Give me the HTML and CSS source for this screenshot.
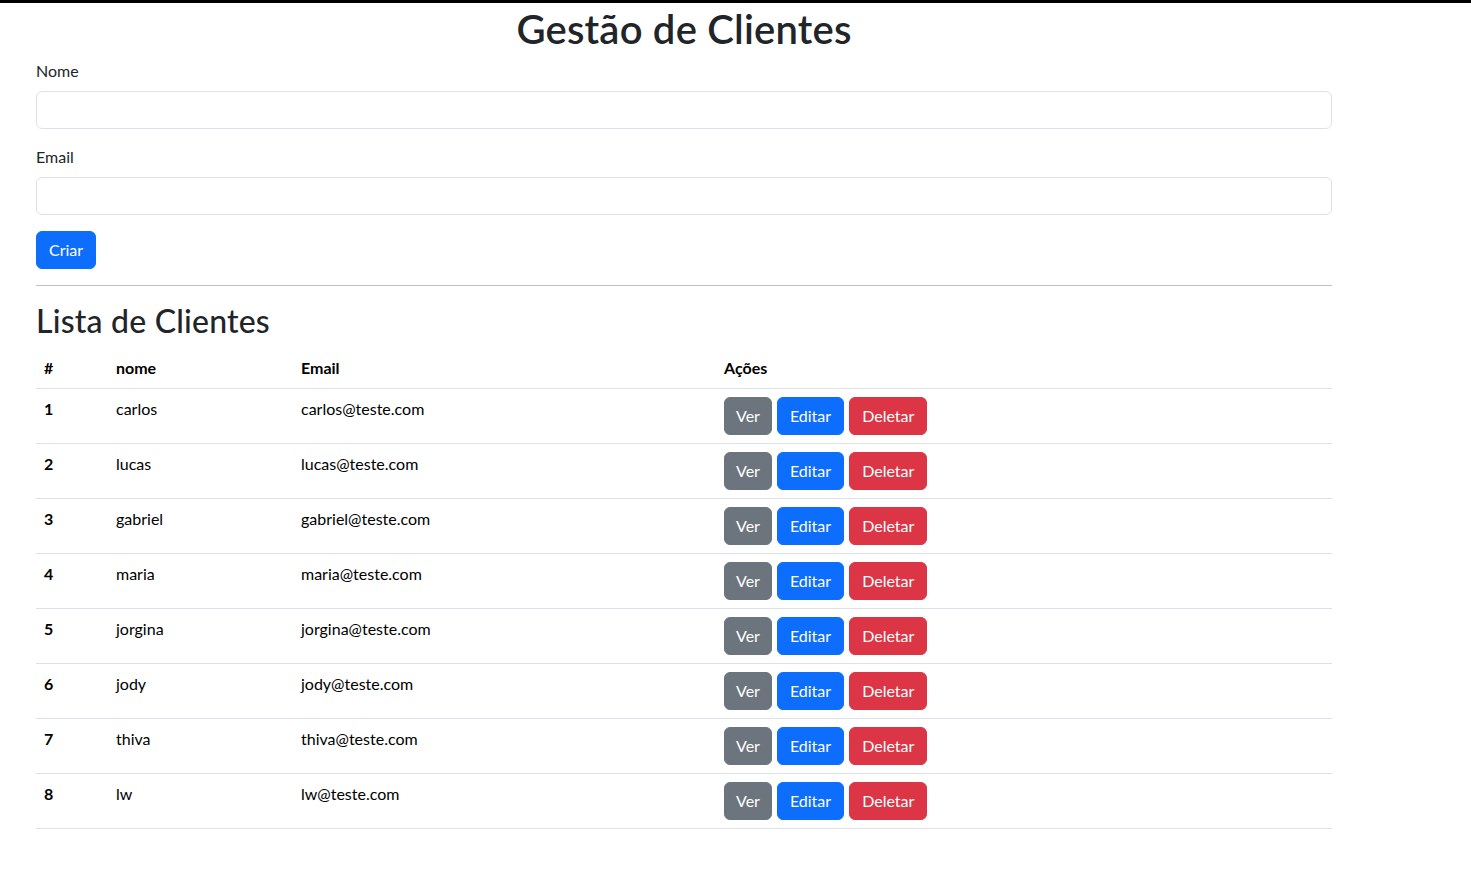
FILE: index.html
```html
<!DOCTYPE html>
<html lang="pt">
<head>
<meta charset="utf-8">
<title>Gestão de Clientes</title>
<link rel="stylesheet" href="styles.css">
</head>
<body>
<div class="topbar"></div>
<div class="container">
  <h1 class="title">Gestão de Clientes</h1>
  <form class="form">
    <div class="group">
      <label class="label" for="nome">Nome</label>
      <input class="input" id="nome" type="text">
    </div>
    <div class="group">
      <label class="label" for="email">Email</label>
      <input class="input" id="email" type="email">
    </div>
    <button type="button" class="btn btn-primary">Criar</button>
  </form>
  <hr class="divider">
  <h2 class="subtitle">Lista de Clientes</h2>
  <table class="table">
    <thead>
      <tr><th class="c1">#</th><th class="c2">nome</th><th class="c3">Email</th><th class="c4">Ações</th></tr>
    </thead>
    <tbody>
      <tr><th>1</th><td>carlos</td><td>carlos@teste.com</td><td class="actions"><button class="btn btn-secondary">Ver</button><button class="btn btn-primary">Editar</button><button class="btn btn-danger">Deletar</button></td></tr>
      <tr><th>2</th><td>lucas</td><td>lucas@teste.com</td><td class="actions"><button class="btn btn-secondary">Ver</button><button class="btn btn-primary">Editar</button><button class="btn btn-danger">Deletar</button></td></tr>
      <tr><th>3</th><td>gabriel</td><td>gabriel@teste.com</td><td class="actions"><button class="btn btn-secondary">Ver</button><button class="btn btn-primary">Editar</button><button class="btn btn-danger">Deletar</button></td></tr>
      <tr><th>4</th><td>maria</td><td>maria@teste.com</td><td class="actions"><button class="btn btn-secondary">Ver</button><button class="btn btn-primary">Editar</button><button class="btn btn-danger">Deletar</button></td></tr>
      <tr><th>5</th><td>jorgina</td><td>jorgina@teste.com</td><td class="actions"><button class="btn btn-secondary">Ver</button><button class="btn btn-primary">Editar</button><button class="btn btn-danger">Deletar</button></td></tr>
      <tr><th>6</th><td>jody</td><td>jody@teste.com</td><td class="actions"><button class="btn btn-secondary">Ver</button><button class="btn btn-primary">Editar</button><button class="btn btn-danger">Deletar</button></td></tr>
      <tr><th>7</th><td>thiva</td><td>thiva@teste.com</td><td class="actions"><button class="btn btn-secondary">Ver</button><button class="btn btn-primary">Editar</button><button class="btn btn-danger">Deletar</button></td></tr>
      <tr><th>8</th><td>lw</td><td>lw@teste.com</td><td class="actions"><button class="btn btn-secondary">Ver</button><button class="btn btn-primary">Editar</button><button class="btn btn-danger">Deletar</button></td></tr>
    </tbody>
  </table>
</div>
</body>
</html>
```
FILE: styles.css
```css
* { box-sizing: border-box; }
html, body { margin: 0; padding: 0; background: #fff; }
body {
  font-family: "Segoe UI", Lato, "Noto Sans", sans-serif;
  font-size: 16px;
  line-height: 1.5;
  color: #212529;
}
.topbar { height: 3px; background: #000; }
.container {
  width: 1320px;
  margin-left: 24px;
  padding: 0 12px;
}
.title {
  margin: 2px 0 6px;
  font-size: 40px;
  font-weight: 600;
  line-height: 1.2;
  text-align: center;
  letter-spacing: 0.2px;
}
.group { margin-bottom: 16px; }
.label { display: inline-block; margin-bottom: 8px; }
.input {
  display: block;
  width: 100%;
  height: 38px;
  padding: 6px 12px;
  font: inherit;
  color: #212529;
  background: #fff;
  border: 1px solid #dee2e6;
  border-radius: 6px;
}
.btn {
  display: inline-block;
  padding: 6px 12px;
  font: inherit;
  font-size: 16px;
  line-height: 24px;
  color: #fff;
  border: 1px solid transparent;
  border-radius: 6px;
  cursor: pointer;
}
.btn-primary { background: #0d6efd; border-color: #0d6efd; }
.btn-secondary { background: #6c757d; border-color: #6c757d; }
.btn-danger { background: #dc3545; border-color: #dc3545; }
.divider {
  margin: 16px 0;
  border: 0;
  border-top: 1px solid #bfc0c1;
  height: 0;
}
.subtitle {
  margin: 0 0 8px;
  font-size: 32px;
  font-weight: 500;
  line-height: 1.2;
  letter-spacing: 0.2px;
}
.table {
  width: 100%;
  border-collapse: collapse;
  color: #000;
}
.table th, .table td {
  padding: 8px;
  text-align: left;
  vertical-align: top;
  border-bottom: 1px solid #dee2e6;
}
.table th { font-weight: 700; }
.c1 { width: 72px; }
.c2 { width: 185px; }
.c3 { width: 423px; }
.actions .btn { margin-right: 5px; }
.actions .btn-secondary { padding: 6px 11px; }
```
